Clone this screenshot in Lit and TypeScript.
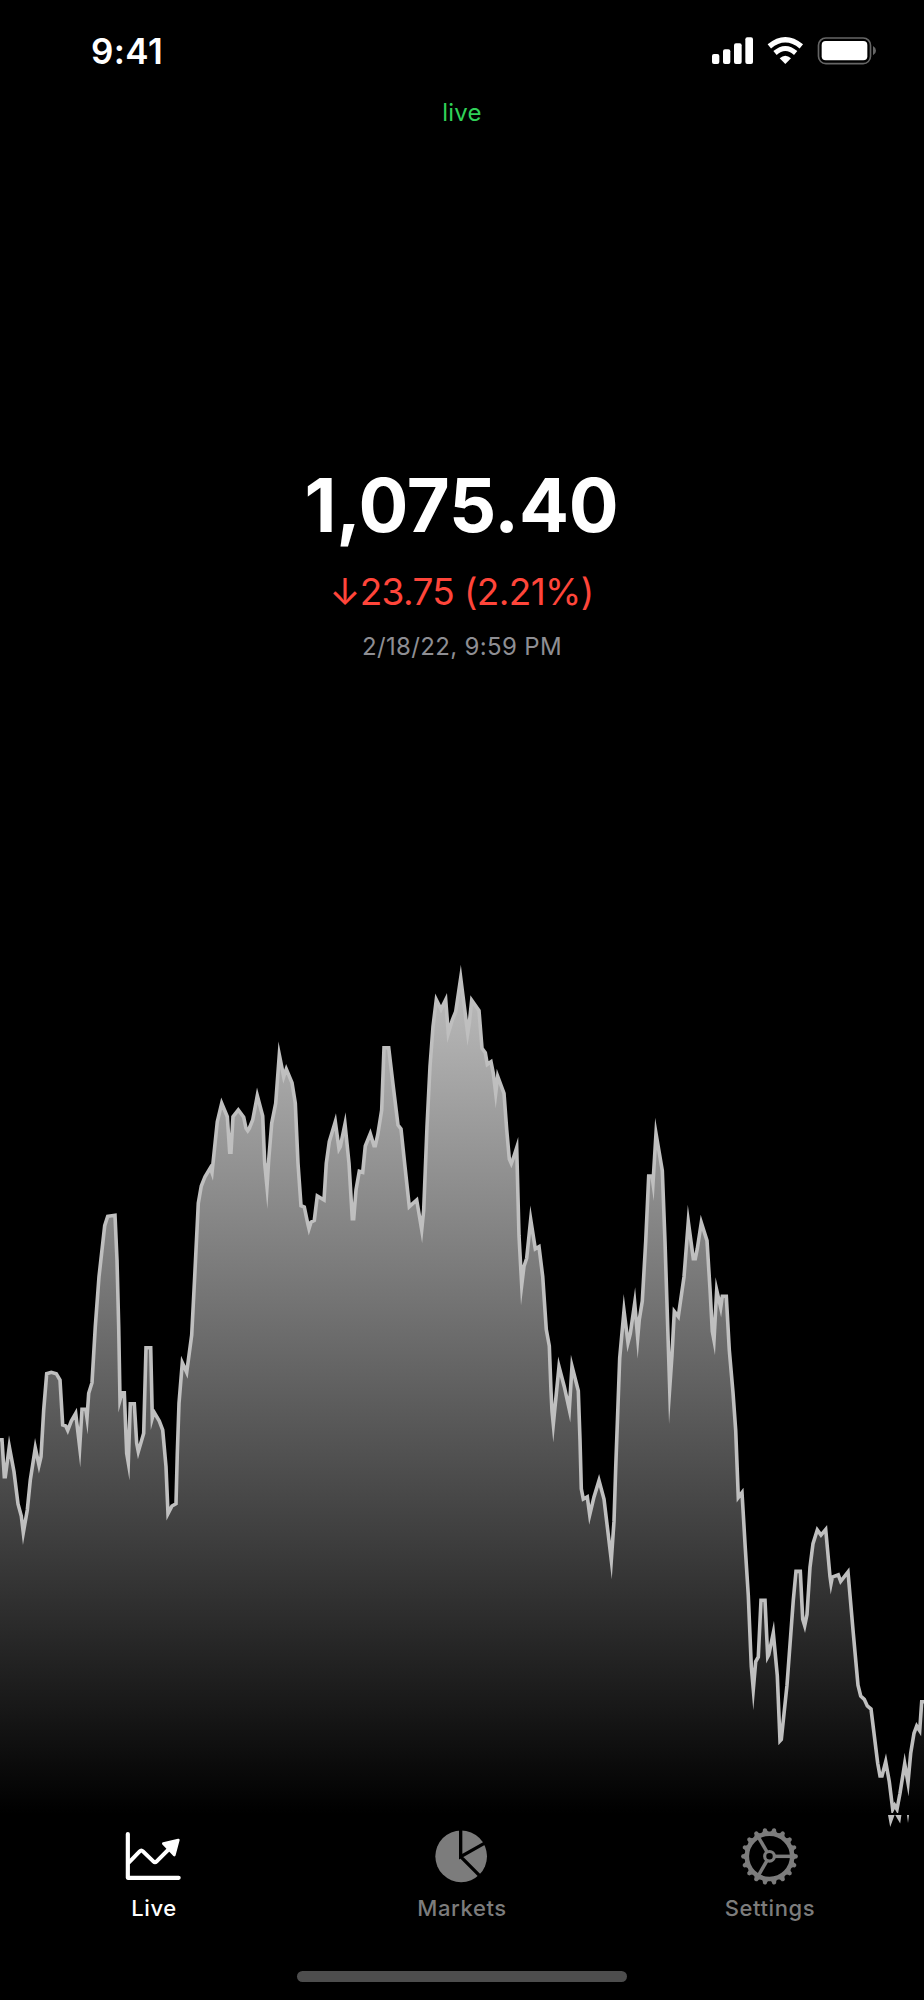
import { LitElement, html, css, svg } from "lit";
import { customElement, property } from "lit/decorators.js";

type Point = [number, number];

// Price series for the visible window, in chart pixels.
const section = (pts: number[], ox: number, oy: number, sy: number): Point[] => {
  const out: Point[] = [];
  for (let i = 0; i < pts.length; i += 2) out.push([ox + pts[i] / 3, oy + pts[i + 1] / sy]);
  return out;
};

const opening = [
  -6,1139, 6,1139, 13,1250, 16,1250, 28,1160, 42,1235, 54,1332, 64,1368, 70,1418, 82,1350, 91,1260,
  106,1164, 117,1216, 123,1190, 131,1050, 140,941, 154,937, 169,941, 180,960, 188,1095, 197,1098,
  203,1111, 214,1083, 227,1060, 239,1162, 246,1048, 257,1048, 261,1074, 266,1000, 276,968, 286,800,
  297,650, 314,497, 323,469, 345,466, 351,600, 356,800, 360,1020, 366,998, 373,998, 380,1180, 385,1208,
  391,1031, 403,1031, 410,1150, 415,1175, 431,1120, 438,863, 452,863, 457,1074, 462,1056, 478,1083,
  488,1110, 498,1220, 504,1361, 516,1338, 528,1331, 532,1180, 537,1030, 547,908, 560,937, 575,825,
  584,650, 595,430, 604,378, 615,350, 631,324, 636,338, 652,185, 665,130, 682,170, 689,277, 693,277,
  699,170, 715,150, 731,172, 738,205, 743,212, 748,205, 758,180, 772,107, 788,168, 794,310, 801,380,
  806,300,
];
const morning = [
  215,520, 227,460, 238,314, 251,380, 259,357, 276,398, 286,460, 294,640, 303,767, 313,771, 323,820,
  327,836, 333,817, 343,811, 352,738, 372,750, 379,640, 388,575, 406,515, 417,597, 421,590, 435,522,
  447,640, 457,806, 461,806, 468,720, 478,664, 488,667, 496,588, 511,551, 522,587, 526,587, 533,555,
  545,480, 552,293, 566,293, 580,410, 594,525, 603,537, 615,650, 628,770, 650,750, 665,839, 671,780,
  681,530, 690,350, 699,230, 709,149, 723,178, 737,149, 745,250, 757,210, 767,185, 782,84, 803,250,
  808,220, 815,151, 837,182, 846,295, 856,308, 862,343, 873,335, 880,370, 887,430, 893,379, 912,430,
];
const midday = [
  260,440, 268,512, 274,523, 280,510, 290,484, 297,700, 305,821, 312,775, 320,755, 332,660, 346,732,
  357,727, 368,800, 379,930, 388,970, 393,1080, 396,1130, 400,1162, 417,1021, 433,1070, 448,1126,
  456,1020, 475,1080, 480,1200, 484,1320, 490,1345, 502,1340, 509,1384, 522,1340, 537,1300, 552,1345,
  574,1495, 582,1400, 587,1270, 599,1000, 612,884, 624,962, 631,940, 644,865, 653,950, 658,905,
];
const afternoon = [
  127,426, 137,300, 146,161, 156,161, 159,176, 168,71, 187,150, 195,300, 204,500, 209,611, 216,540,
  223,448, 235,459, 252,375, 265,258, 280,336, 286,336, 292,315, 304,260, 321,298, 330,400, 337,490,
  342,509, 350,403, 362,440, 367,416, 379,416, 388,530, 399,620, 407,700, 415,842, 426,832, 436,950,
  445,1050, 454,1200, 460,1249, 467,1190, 475,1180, 483,1060, 495,1060, 503,1180, 506,1176, 520,1129,
  532,1220, 540,1358, 544,1355, 561,1240, 580,1060, 588,999, 601,999, 608,1100, 614,1114, 621,1090,
  630,990, 639,940, 652,911, 663,922, 677,910, 690,1010, 693,1025, 697,1011, 715,1006, 722,1020,
  744,1000, 760,1130, 774,1240, 782,1263, 793,1270, 802,1284,
];
const closing = [
  33,87, 53,250, 60,288, 66,288, 77,245, 88,305, 98,388, 104,376, 111,388, 120,340, 134,251, 144,308,
  152,220, 162,160, 170,138, 179,152, 185,65, 200,65,
];

const TOP = 960;
const BOTTOM = 1814;
const series: Point[] = [
  ...section(opening, 0, 1060, 3),
  ...section(morning, 200, 950, 3),
  ...section(midday, 420, 950, 2.45),
  ...section(afternoon, 600, 1100, 2.119),
  ...section(closing, 860, 1680, 3),
];
const line = series.map(([x, y]) => `${x.toFixed(1)},${(y - TOP).toFixed(1)}`).join(" L");

@customElement("price-chart")
class PriceChart extends LitElement {
  static styles = css`
    :host { display: block; }
    .plot { display: block; width: 924px; height: 868px; }
    .line { fill: none; stroke: #bfbfbf; stroke-width: 3.6; stroke-miterlimit: 20; }
    .tip { fill: #bfbfbf; }
  `;
  render() {
    return html`<svg class="plot" viewBox="0 0 924 868">
      <defs>
        <linearGradient id="fade" gradientUnits="userSpaceOnUse" x1="0" y1="6" x2="0" y2="854">
          <stop offset="0" stop-color="#bfbfbf" />
          <stop offset="1" stop-color="#000" />
        </linearGradient>
        <clipPath id="plotArea"><rect width="924" height="853" /></clipPath>
      </defs>
      <g clip-path="url(#plotArea)">
        <path d="M${line} L927,${BOTTOM - TOP} L-2,${BOTTOM - TOP} Z" fill="url(#fade)" />
        <path class="line" d="M${line}" />
      </g>
      <path class="tip" d="M888 855h6.6l-4.4 12zM895.2 855h6.2l-1.2 8.4zM907 855h2l-1 8z" />
    </svg>`;
  }
}

const icons: Record<string, unknown> = {
  Live: svg`<svg viewBox="102 54 180 174" width="60" height="58">
    <g fill="none" stroke="currentColor" stroke-width="12.500" stroke-linecap="round" stroke-linejoin="round">
      <path d="M113.500 72V203.500H266" />
      <path stroke-width="12" d="M117 157L149 124Q154 119 159 124L190 154Q195 159 200 154L246 108" />
    </g>
    <path d="M265 90L220 101L253 135Z" fill="currentColor" stroke="currentColor" stroke-width="8" stroke-linejoin="round" />
  </svg>`,
  Markets: svg`<svg viewBox="96 54 180 174" width="60" height="58">
    <circle cx="183.500" cy="139" r="77.500" fill="currentColor" />
    <path d="M182 56V140L262 95M182 140L244 202" fill="none" stroke="#000" stroke-width="10" />
  </svg>`,
  Settings: svg`<svg viewBox="120 54 180 174" width="60" height="58">
    <g transform="translate(208.500 139)" fill="none" stroke="currentColor">
      <circle r="68" stroke-width="13.500" />
      <circle r="14.500" stroke-width="9.500" />
      ${[0, 120, 240].map((a) => svg`<path d="M16 0H66" stroke-width="10.500" transform="rotate(${a})" />`)}
      ${Array.from({ length: 18 }, (_, i) => svg`<path d="M72 -11Q76 -6 83 -5.500Q88 0 83 5.500Q76 6 72 11Z" fill="currentColor" stroke="none" transform="rotate(${i * 20})" />`)}
    </g>
  </svg>`,
};

@customElement("tab-item")
class TabItem extends LitElement {
  @property() label = "";
  static styles = css`
    :host { display: flex; flex: 1; flex-direction: column; align-items: center; }
    svg { display: block; }
    .label { font-size: 22px; line-height: 26px; margin-top: 9px; letter-spacing: 0.6px; font-weight: 450; }
  `;
  render() {
    return html`${icons[this.label]}<span class="label">${this.label}</span>`;
  }
}

@customElement("app-root")
class AppRoot extends LitElement {
  static styles = css`
    :host {
      display: flex; flex-direction: column; width: 924px; height: 2000px; overflow: hidden;
      background: #000; color: #fff; font-family: Inter, "Liberation Sans", sans-serif;
    }
    .status { display: flex; align-items: center; justify-content: space-between; height: 101px; padding: 0 46px 0 91px; box-sizing: border-box; flex: none; }
    .time { font-size: 35px; font-weight: 600; letter-spacing: 0.4px; }
    .live { text-align: center; color: #30d158; font-size: 24px; line-height: 24px; letter-spacing: 0.2px; }
    .quote { display: flex; flex-direction: column; align-items: center; padding-top: 335px; height: 835px; box-sizing: border-box; flex: none; }
    .price { font-size: 74px; line-height: 90px; font-weight: 700; letter-spacing: -0.2px; margin-right: 1px; }
    .change { font-size: 37px; line-height: 50px; margin-top: 17px; margin-right: 1px; color: #ff453a; letter-spacing: -0.65px; }
    .date { font-size: 24px; line-height: 30px; margin-top: 15px; color: #8e8e93; letter-spacing: 0.35px; }
    .tabs { display: flex; height: 143px; flex: none; }
    .tab { color: #7c7c7c; }
    .active { color: #fff; }
    .home { width: 330px; height: 11px; flex: none; border-radius: 6px; background: #4d4d4d; margin: 0 auto; }
  `;
  render() {
    return html`
      <div class="status">
        <span class="time">9:41</span>
        <svg viewBox="60 41 504 102" width="168" height="34">
          <g fill="#fff">
            <rect x="66" y="101" width="22" height="30" rx="6" />
            <rect x="99" y="87" width="22" height="44" rx="6" />
            <rect x="132" y="69" width="23" height="62" rx="6" />
            <rect x="166" y="51" width="23" height="80" rx="6" />
            <path d="M286 131L269 114Q286 99 303 114Z" />
            <rect x="395" y="62" width="137" height="58" rx="12" />
          </g>
          <g fill="none" stroke="#fff">
            <path d="M238 78Q286 38 334 78" stroke-width="16" />
            <path d="M255 98Q286 71 317 98" stroke-width="15" />
          </g>
          <rect x="385.500" y="53" width="156" height="77" rx="22" fill="none" stroke="#666" stroke-width="5" />
          <path d="M549 77Q558 82 558 91T549 105Z" fill="#666" />
        </svg>
      </div>
      <div class="live">live</div>
      <div class="quote">
        <div class="price">1,075.40</div>
        <div class="change">↓23.75 (2.21%)</div>
        <div class="date">2/18/22, 9:59 PM</div>
      </div>
      <price-chart></price-chart>
      <nav class="tabs">
        <tab-item class="tab active" label="Live"></tab-item>
        <tab-item class="tab" label="Markets"></tab-item>
        <tab-item class="tab" label="Settings"></tab-item>
      </nav>
      <div class="home"></div>
    `;
  }
}
